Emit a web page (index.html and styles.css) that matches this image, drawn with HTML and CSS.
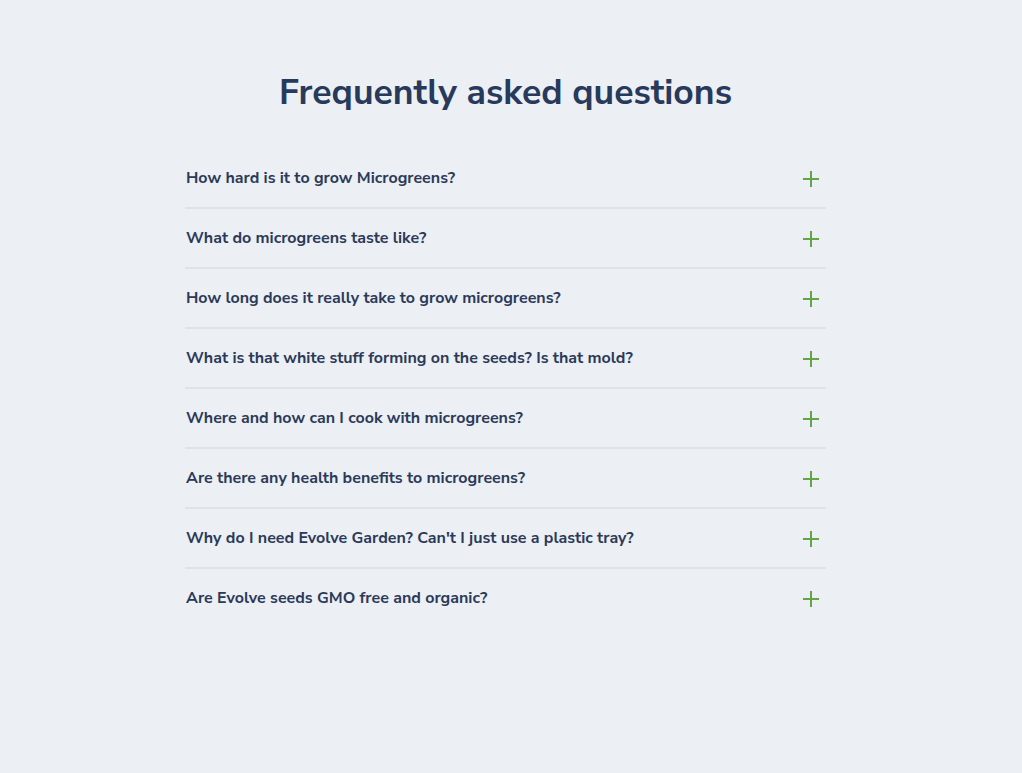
FILE: index.html
```html
<!DOCTYPE html>
<html lang="en">
<head>
<meta charset="utf-8">
<title>FAQ</title>
<link rel="stylesheet" href="styles.css">
</head>
<body>
<main class="faq">
  <h1 class="faq-title">Frequently asked questions</h1>
  <ul class="faq-list">
    <li class="faq-item"><span class="faq-q">How hard is it to grow Microgreens?</span><span class="plus"></span></li>
    <li class="faq-item"><span class="faq-q">What do microgreens taste like?</span><span class="plus"></span></li>
    <li class="faq-item"><span class="faq-q">How long does it really take to grow microgreens?</span><span class="plus"></span></li>
    <li class="faq-item"><span class="faq-q">What is that white stuff forming on the seeds? Is that mold?</span><span class="plus"></span></li>
    <li class="faq-item"><span class="faq-q">Where and how can I cook with microgreens?</span><span class="plus"></span></li>
    <li class="faq-item"><span class="faq-q">Are there any health benefits to microgreens?</span><span class="plus"></span></li>
    <li class="faq-item"><span class="faq-q">Why do I need Evolve Garden? Can't I just use a plastic tray?</span><span class="plus"></span></li>
    <li class="faq-item"><span class="faq-q">Are Evolve seeds GMO free and organic?</span><span class="plus"></span></li>
  </ul>
</main>
</body>
</html>
```
FILE: styles.css
```css
html, body {
  margin: 0;
  padding: 0;
  background: #eceff4;
  font-family: "Nunito Sans", Lato, "Open Sans", sans-serif;
  color: #293a5b;
}
.faq {
  width: 641px;
  margin: 0 auto;
  padding-top: 69px;
  padding-right: 11px;
}
.faq-title {
  margin: 0 0 32px;
  text-align: center;
  font-size: 35.6px;
  line-height: 48px;
  font-weight: 700;
  color: #283a5c;
}
.faq-list {
  list-style: none;
  margin: 0;
  padding: 0;
}
.faq-item {
  display: flex;
  align-items: center;
  justify-content: space-between;
  height: 58px;
  border-bottom: 2px solid #dfe2e7;
  padding: 0 7px 0 1px;
}
.faq-item:last-child {
  border-bottom: none;
}
.faq-q {
  font-size: 16px;
  font-weight: 700;
  color: #2b3a59;
}
.plus {
  position: relative;
  width: 16px;
  height: 16px;
  flex: none;
  margin-top: 2px;
}
.plus::before, .plus::after {
  content: "";
  position: absolute;
  background: #63a545;
}
.plus::before {
  left: 0;
  top: 7px;
  width: 16px;
  height: 2px;
}
.plus::after {
  left: 7px;
  top: 0;
  width: 2px;
  height: 16px;
}
```
